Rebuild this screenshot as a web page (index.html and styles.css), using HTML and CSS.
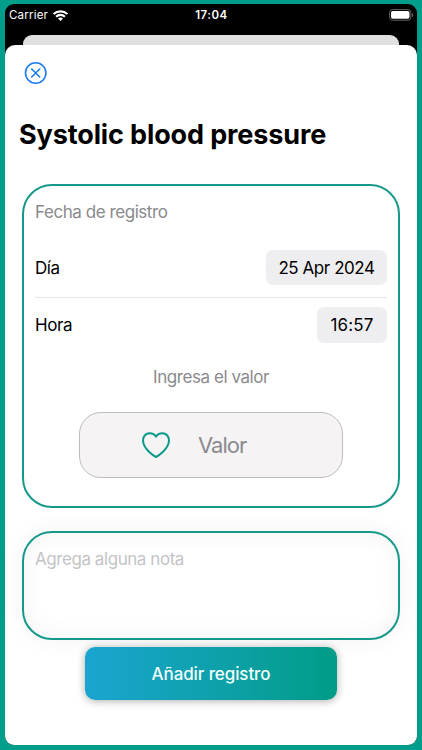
FILE: index.html
```html
<!DOCTYPE html>
<html lang="es">
<head>
  <meta charset="UTF-8">
  <meta name="viewport" content="width=device-width, initial-scale=1.0">
  <title>Systolic blood pressure</title>
  <link rel="stylesheet" href="styles.css">
</head>
<body>
  <div class="phone">
    <!-- Status Bar -->
    <div class="status-bar">
      <div class="carrier">
        <span>Carrier</span>
        <svg width="15" height="11" viewBox="0 0 15 11" fill="none" stroke="#fff" stroke-width="2.1">
          <path d="M0.7 4.1C4.5 0.4 10.5 0.4 14.3 4.1"/>
          <path d="M3.1 6.7C5.6 4.3 9.4 4.3 11.9 6.7"/>
          <path d="M7.5 11L5 8.5C6.4 7.2 8.6 7.2 10 8.5Z" fill="#fff" stroke="none"/>
        </svg>
      </div>
      <span class="clock">17:04</span>
      <svg class="battery" width="25" height="12" viewBox="0 0 25 12">
        <rect x="0.6" y="0.6" width="21.3" height="10.6" rx="3" fill="none" stroke="#666" stroke-width="1"/>
        <rect x="2" y="2" width="18.5" height="7.8" rx="1.8" fill="#fff"/>
        <path d="M23.1 4V8C24.6 7.4 24.6 4.6 23.1 4Z" fill="#777"/>
      </svg>
    </div>

    <div class="back-card"></div>

    <!-- Sheet -->
    <div class="sheet">
      <button type="button" class="close" aria-label="Cerrar">
        <svg width="24" height="24" viewBox="0 0 24 24" fill="none" stroke="#1b7cf0" stroke-width="1.6" stroke-linecap="round">
          <circle cx="12.7" cy="12" r="10.2"/>
          <path d="M8.7 8L16.7 16M16.7 8L8.7 16"/>
        </svg>
      </button>

      <h1>Systolic blood pressure</h1>

      <form class="record-form">
        <div class="card">
          <p class="card-title">Fecha de registro</p>
          <div class="row">
            <span class="day-label">Día</span>
            <span class="pill date">25 Apr 2024</span>
          </div>
          <div class="row">
            <span class="hour-label">Hora</span>
            <span class="pill time">16:57</span>
          </div>
          <p class="hint"><span>Ingresa el valor</span></p>
          <div class="value-field">
            <svg width="30" height="28" viewBox="0 0 30 28" fill="none" stroke="#0a9988" stroke-width="2" stroke-linejoin="round">
              <path d="M15 26C13.6 25.3 2 18.3 2 9.3C2 5.2 4.9 2.2 8.6 2.2C11.4 2.2 13.7 3.3 15 5.6C16.3 3.3 18.6 2.2 21.4 2.2C25.1 2.2 28 5.2 28 9.3C28 18.3 16.4 25.3 15 26Z"/>
            </svg>
            <span>Valor</span>
          </div>
        </div>

        <div class="card note"><span>Agrega alguna nota</span></div>

        <button type="button" class="submit"><span>Añadir registro</span></button>
      </form>
    </div>
  </div>
</body>
</html>
```
FILE: styles.css
```css
* {
  box-sizing: border-box;
}

body {
  margin: 0;
  height: 750px;
  padding: 4px 5px 5px 5px;
  background-color: #029e8c;
  font-family: Inter, "Liberation Sans", sans-serif;
  font-size: 17px;
  letter-spacing: -0.44px;
  color: #000;
}

h1, p {
  margin: 0;
}

.phone {
  height: 741px;
  background-color: #000;
  border-radius: 9px;
  overflow: hidden;
  display: flex;
  flex-direction: column;
}

.status-bar {
  height: 31px;
  padding: 0 3px 9px 4px;
  display: grid;
  grid-template-columns: 1fr auto 1fr;
  align-items: center;
  color: #fff;
  font-size: 11.5px;
  letter-spacing: 0.2px;
}

.carrier {
  display: flex;
  align-items: center;
  gap: 5px;
}

.clock {
  font-weight: 600;
  letter-spacing: 0.5px;
}

.battery {
  justify-self: end;
}

.back-card {
  height: 10px;
  margin: 0 18px;
  background-color: #e0e0e0;
  border-radius: 9px 9px 0 0;
}

.sheet {
  flex: 1;
  padding: 16px 17px 0;
  background-color: #fff;
  border-radius: 10px 10px 0 0;
}

.close {
  display: block;
  width: 24px;
  height: 24px;
  margin-left: 1px;
  padding: 0;
  border: none;
  background: none;
}

h1 {
  margin: 33px 0 0 -3px;
  font-size: 27px;
  line-height: 34px;
  font-weight: 700;
  letter-spacing: -0.12px;
  white-space: nowrap;
}

.record-form {
  display: flex;
  flex-direction: column;
  align-items: center;
  margin-top: 32px;
}

.card {
  width: 378px;
  height: 324px;
  padding: 0 11px;
  border: 2px solid #16998a;
  border-radius: 30px;
  background-color: #fff;
}

.card-title {
  padding-top: 15px;
  line-height: 22px;
  color: #8a8a8e;
}

.row {
  height: 56px;
  display: flex;
  align-items: center;
  justify-content: space-between;
}

.card-title + .row {
  height: 60px;
  margin-top: 15px;
  border-bottom: 1px solid #e6e6e8;
}

.row + .row {
  height: 53px;
}

.pill {
  height: 35px;
  display: flex;
  align-items: center;
  justify-content: center;
  background-color: #eeeef0;
  border-radius: 7px;
}

.date {
  width: 121px;
}

.time {
  width: 70px;
  height: 36px;
  letter-spacing: 0.1px;
}

.hint {
  margin-top: 15px;
  line-height: 22px;
  text-align: center;
  color: #8a8a8e;
}

.value-field {
  width: 264px;
  height: 66px;
  margin: 24px auto 0;
  padding-left: 61px;
  display: flex;
  align-items: center;
  gap: 27px;
  border: 1px solid #bdbbbc;
  border-radius: 22px;
  background-color: #f5f3f4;
  color: #8a8a8e;
  font-size: 22px;
  letter-spacing: -1px;
}

.note {
  height: 109px;
  margin-top: 23px;
  padding-top: 15px;
  line-height: 22px;
  color: #c4c4c6;
  box-shadow: 0 0 24px rgba(0, 0, 0, 0.05), inset 0 0 24px rgba(0, 0, 0, 0.05);
}

.submit {
  width: 252px;
  height: 53px;
  margin-top: 7px;
  border: none;
  border-radius: 10px;
  background: linear-gradient(90deg, #1aa5d0, #029c87);
  box-shadow: 0 1px 8px rgba(0, 0, 0, 0.33);
  color: #f0fffc;
  font-family: inherit;
  font-size: 17px;
  font-weight: 500;
  letter-spacing: -0.1px;
}
```
